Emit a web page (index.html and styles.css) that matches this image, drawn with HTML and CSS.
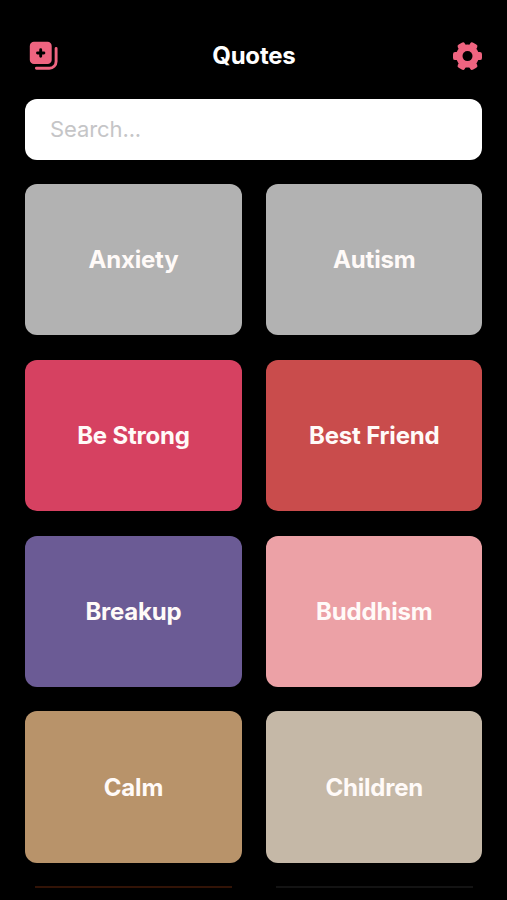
FILE: index.html
```html
<!DOCTYPE html>
<html lang="en">
<head>
<meta charset="utf-8">
<title>Quotes</title>
<link rel="stylesheet" href="styles.css">
</head>
<body>
<div class="app">
  <header class="bar">
    <button class="icon-button" aria-label="Add category">
      <svg viewBox="0 0 40 40" width="40" height="40">
        <rect class="fill" x="9.8" y="5.8" width="21.9" height="22.3" rx="4.2"/>
        <path class="plus" d="M20.7 13.8v6.4M17.5 17h6.4"/>
        <path class="line" d="M36.1 12.4v13.2a6.7 6.7 0 0 1-6.7 6.7H16.4"/>
      </svg>
    </button>
    <h1 class="title">Quotes</h1>
    <button class="icon-button" aria-label="Settings">
      <svg viewBox="-19.5 -20.1 40 40" width="40" height="40">
        <g class="fill">
          <circle r="11.5"/>
          <rect x="-14.5" y="-4" width="29" height="8" rx="2.2"/>
          <rect x="-14.5" y="-4" width="29" height="8" rx="2.2" transform="rotate(60)"/>
          <rect x="-14.5" y="-4" width="29" height="8" rx="2.2" transform="rotate(120)"/>
        </g>
        <circle class="hole" r="5"/>
      </svg>
    </button>
  </header>
  <input class="search" type="text" placeholder="Search..." aria-label="Search">
  <main class="grid">
    <div class="card gray"><span>Anxiety</span></div>
    <div class="card gray"><span>Autism</span></div>
    <div class="card rose"><span>Be Strong</span></div>
    <div class="card red"><span>Best Friend</span></div>
    <div class="card violet"><span>Breakup</span></div>
    <div class="card pink"><span>Buddhism</span></div>
    <div class="card tan"><span>Calm</span></div>
    <div class="card sand"><span>Children</span></div>
  </main>
  <div class="peek"><i class="edge brown"></i><i class="edge dark"></i></div>
</div>
</body>
</html>
```

FILE: styles.css
```css
* { box-sizing: border-box; }
body {
  margin: 0;
  background: #000;
  font-family: Inter, "Liberation Sans", sans-serif;
}
.app {
  height: 900px;
  overflow: hidden;
  padding: 36px 24.6px 0 25.3px;
}
.bar {
  display: flex;
  justify-content: space-between;
  align-items: center;
  height: 40px;
  margin: 0 -5.4px 0 -5.3px;
}
.icon-button {
  width: 40px;
  height: 40px;
  padding: 0;
  border: 0;
  background: none;
}
.icon-button svg { display: block; }
.fill { fill: #ef6480; }
.hole { fill: #000; }
.line, .plus {
  fill: none;
  stroke: #ef6480;
  stroke-width: 2.9;
  stroke-linecap: round;
}
.plus { stroke: #000; }
.title {
  margin: 0;
  color: #fff;
  font-size: 24px;
  font-weight: 650;
  line-height: 40px;
  letter-spacing: -0.2px;
}
.search {
  display: block;
  width: 100%;
  height: 61px;
  margin-top: 22.6px;
  padding: 0 24.7px;
  border: 0;
  border-radius: 12px;
  background: #fff;
  font: 400 22px Inter, "Liberation Sans", sans-serif;
  letter-spacing: -0.1px;
}
.search::placeholder { color: #c5c5c7; opacity: 1; }
.grid {
  display: grid;
  grid-template-columns: 1fr 1fr;
  grid-auto-rows: 151.3px;
  gap: 24.5px;
  margin-top: 24.5px;
}
.card {
  display: flex;
  align-items: center;
  justify-content: center;
  border-radius: 12px;
  color: #fffaf8;
  font-size: 24px;
  font-weight: 650;
  letter-spacing: -0.2px;
}
.gray { background: #b2b2b2; }
.rose { background: #d64161; }
.red { background: #c94c4c; }
.violet { background: #6b5b95; }
.pink { background: #eca1a6; }
.tan { background: #b8936a; }
.sand { background: #c5b8a7; }
.peek {
  display: grid;
  grid-template-columns: 1fr 1fr;
  gap: 44px;
  margin-top: 23.6px;
  padding: 0 9.8px;
}
.edge { height: 2px; }
.brown { background: #321306; }
.dark { background: #131313; }
```
